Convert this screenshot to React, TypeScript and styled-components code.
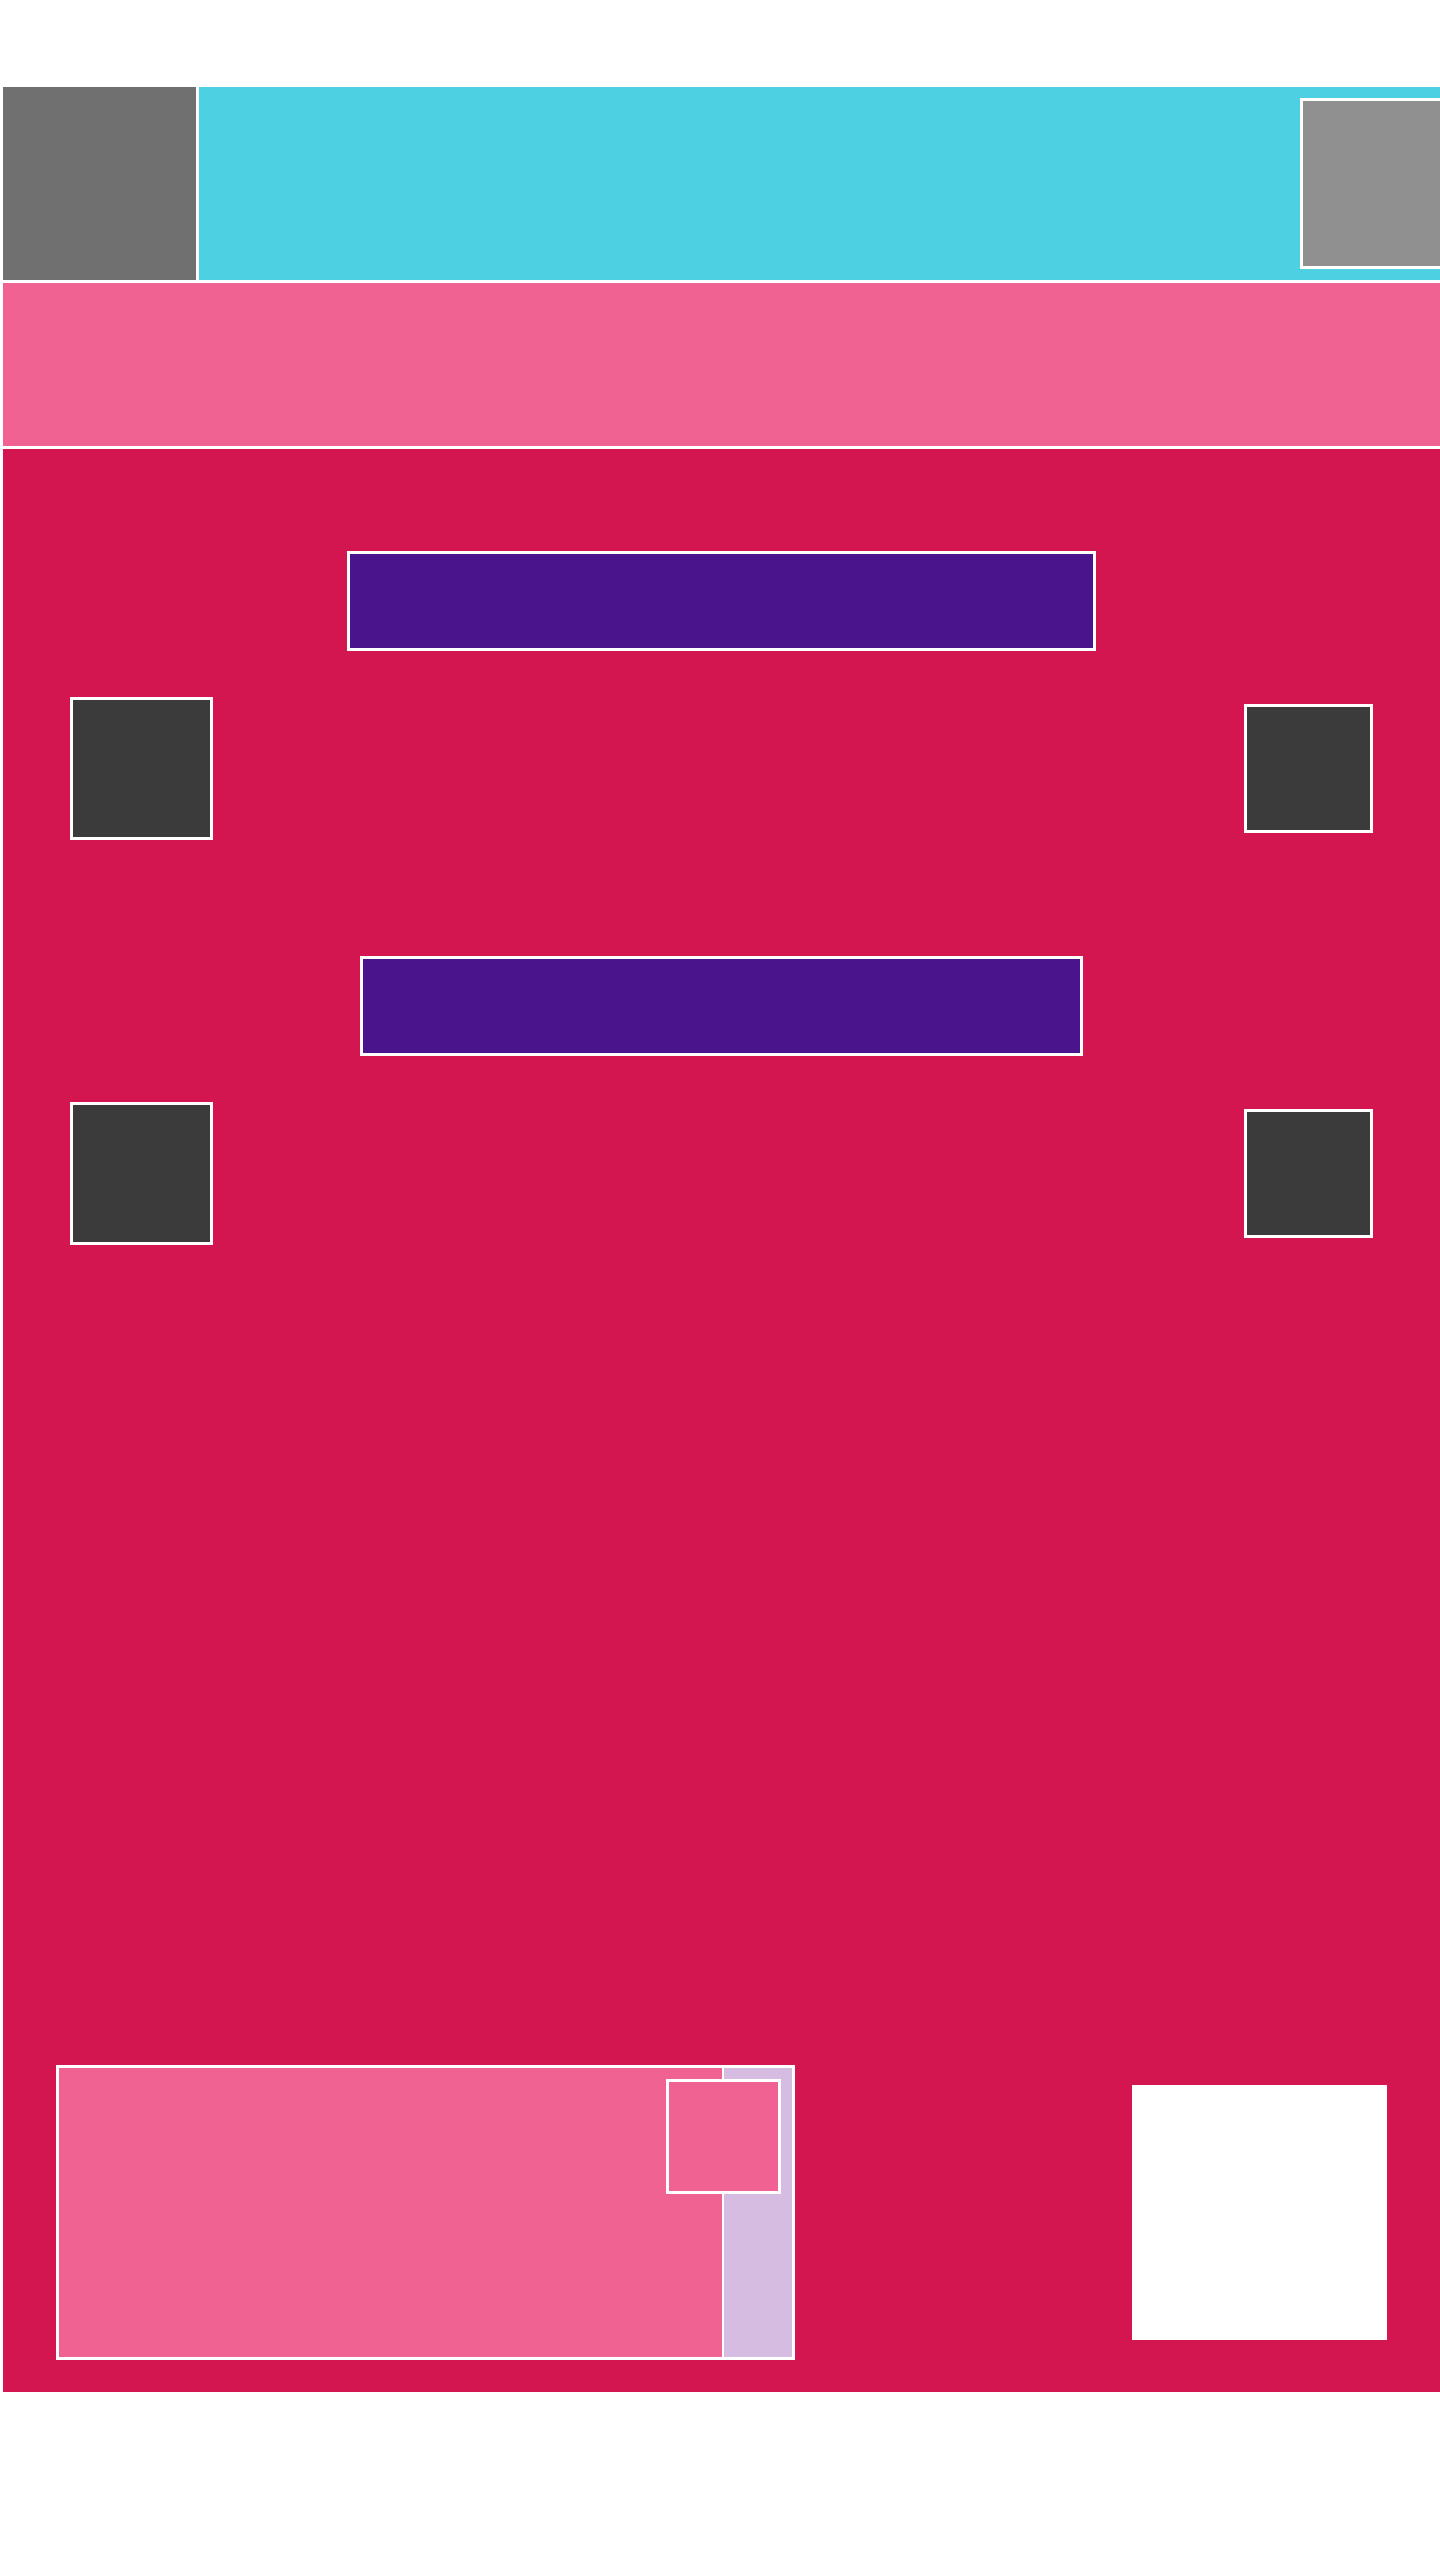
import React from "react";
import styled, { createGlobalStyle } from "styled-components";

const GlobalStyle = createGlobalStyle`
  *, *::before, *::after { box-sizing: border-box; }
  html, body { margin: 0; padding: 0; background: #ffffff; overflow-x: hidden; }
  body { font-family: "Liberation Sans", Arial, sans-serif; }
`;

const Page = styled.div`
  width: 1440px;
  padding: 87px 0 0 3px;
  display: flex;
  flex-direction: column;
  gap: 3px;
  background: #ffffff;
  overflow: hidden;
`;

const Header = styled.header`
  height: 193px;
  display: flex;
  gap: 3px;
`;

const Logo = styled.div`
  width: 193px;
  flex-shrink: 0;
  background: #707070;
`;

const TopBar = styled.div`
  flex: 1;
  display: flex;
  align-items: center;
  justify-content: flex-end;
  background: #4dd0e1;
  overflow: hidden;
`;

const Avatar = styled.div`
  width: 171px;
  height: 171px;
  flex-shrink: 0;
  margin-right: -31px;
  border: 3px solid #ffffff;
  background: #909090;
`;

const Banner = styled.section`
  height: 163px;
  background: #f06292;
`;

const Main = styled.main`
  height: 1943px;
  padding: 102px 53px 32px;
  display: flex;
  flex-direction: column;
  background: #d31650;
`;

const Block = styled.div<{ $gapAfter?: number }>`
  display: flex;
  flex-direction: column;
  gap: 46px;
  margin-bottom: ${(p) => p.$gapAfter ?? 0}px;
`;

const TitleBar = styled.div<{ $w: number }>`
  align-self: center;
  width: ${(p) => p.$w}px;
  height: 100px;
  border: 3px solid #ffffff;
  background: #4a148c;
`;

const ControlRow = styled.div`
  display: flex;
  align-items: center;
  justify-content: space-between;
  padding: 0 14px;
`;

const Control = styled.div<{ $size: number }>`
  width: ${(p) => p.$size}px;
  height: ${(p) => p.$size}px;
  border: 3px solid #ffffff;
  background: #3b3b3b;
`;

const Footer = styled.div`
  margin-top: auto;
  display: flex;
  align-items: center;
  justify-content: space-between;
`;

const Panel = styled.div`
  position: relative;
  width: 739px;
  height: 295px;
  display: flex;
  border: 3px solid #ffffff;
`;

const PanelBody = styled.div`
  flex: 1;
  background: #f06292;
`;

const PanelSide = styled.div`
  width: 70px;
  border-left: 2px solid #ffffff;
  background: #d7bce1;
`;

const Thumb = styled.div`
  position: absolute;
  left: 607px;
  top: 11px;
  width: 115px;
  height: 115px;
  border: 3px solid #ffffff;
  background: #f06292;
`;

const Card = styled.div`
  width: 255px;
  height: 255px;
  background: #ffffff;
`;

export default function App() {
  return (
    <>
      <GlobalStyle />
      <Page>
        <Header>
          <Logo />
          <TopBar>
            <Avatar />
          </TopBar>
        </Header>
        <Banner />
        <Main>
          <Block $gapAfter={116}>
            <TitleBar $w={749} />
            <ControlRow>
              <Control $size={143} />
              <Control $size={129} />
            </ControlRow>
          </Block>
          <Block>
            <TitleBar $w={723} />
            <ControlRow>
              <Control $size={143} />
              <Control $size={129} />
            </ControlRow>
          </Block>
          <Footer>
            <Panel>
              <PanelBody />
              <PanelSide />
              <Thumb />
            </Panel>
            <Card />
          </Footer>
        </Main>
      </Page>
    </>
  );
}
